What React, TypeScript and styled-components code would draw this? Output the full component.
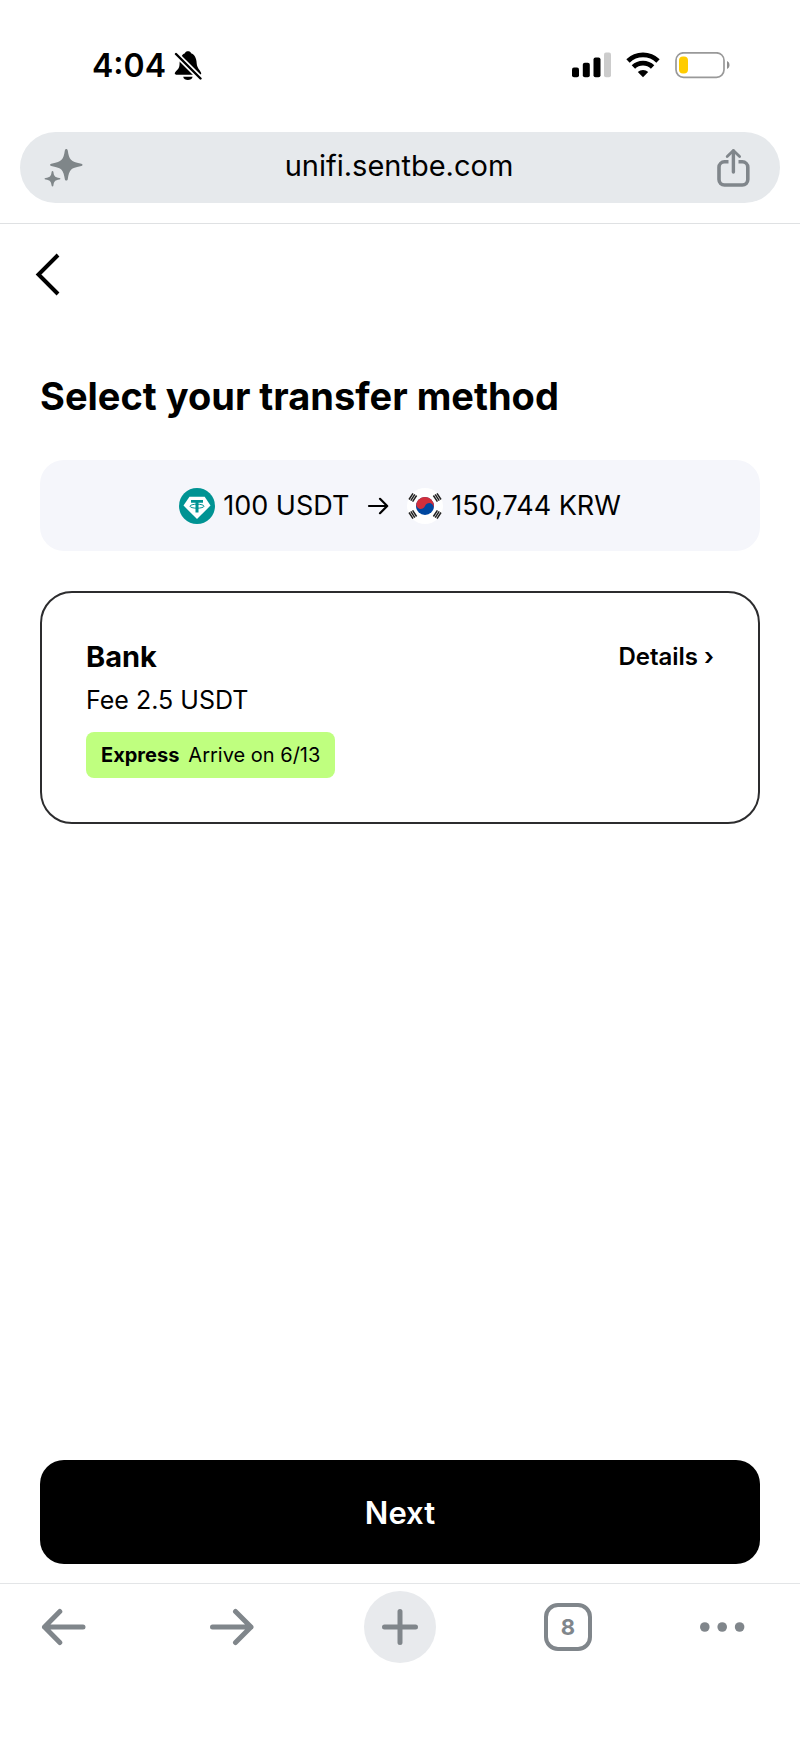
import React from "react";
import styled, {createGlobalStyle} from "styled-components";

const GlobalStyle = createGlobalStyle`
  * {
    box-sizing: border-box;
  }

  body {
    margin: 0;
    background: #fff;
    color: #000;
    font-family: Inter, "Liberation Sans", sans-serif;
  }

  button, input {
    font-family: inherit;
    color: inherit;
  }

  svg {
    display: block;
    flex: none;
  }
`;

const Page = styled.div`
  display: flex;
  flex-direction: column;
  min-height: 100vh;
`;

const StatusBar = styled.header`
  display: flex;
  align-items: center;
  justify-content: space-between;
  height: 132px;
  padding: 0 68px 0 92px;
`;

const StatusGroup = styled.div<{$gap: number}>`
  display: flex;
  align-items: center;
  gap: ${props => props.$gap}px;
`;

const Clock = styled.time`
  font-size: 32px;
  line-height: 40px;
  font-weight: 600;
`;

const BrowserBar = styled.div`
  padding: 0 20px 20px;
  border-bottom: 1px solid #dfe1e3;
`;

const AddressBar = styled.div`
  display: flex;
  align-items: center;
  height: 71px;
  padding: 0 26px 0 24px;
  border-radius: 36px;
  background: #e6e9ec;
`;

const AddressInput = styled.input`
  flex: 1;
  min-width: 0;
  padding: 0 0 4px;
  border: 0;
  outline: 0;
  background: transparent;
  font-size: 29px;
  line-height: 36px;
  text-align: center;
`;

const IconButton = styled.button`
  display: flex;
  align-items: center;
  justify-content: center;
  padding: 0;
  border: 0;
  background: transparent;
  color: #80868b;
  cursor: pointer;
`;

const BackButton = styled(IconButton)`
  align-self: flex-start;
  height: 100px;
  padding: 0 12px 0 32px;
  color: #000;
`;

const Content = styled.main`
  flex: 1;
  display: flex;
  flex-direction: column;
  padding: 48px 40px 19px;
`;

const Title = styled.h1`
  margin: 0 0 40px;
  font-size: 38px;
  line-height: 48px;
  font-weight: 700;
`;

const Summary = styled.div`
  display: flex;
  align-items: center;
  justify-content: center;
  gap: 16px;
  height: 91px;
  margin-bottom: 40px;
  border-radius: 24px;
  background: #f5f6fb;
`;

const Amount = styled.span`
  display: flex;
  align-items: center;
  gap: 8px;
  font-size: 27px;
  line-height: 36px;
`;

const MethodCard = styled.section`
  padding: 44px;
  border: 2px solid #2c2c2e;
  border-radius: 32px;
`;

const MethodHeader = styled.div`
  display: flex;
  align-items: center;
  justify-content: space-between;
`;

const MethodName = styled.h2`
  margin: 0;
  font-size: 29px;
  line-height: 40px;
  font-weight: 700;
`;

const DetailsLink = styled.a`
  display: flex;
  align-items: center;
  gap: 6px;
  color: inherit;
  font-size: 24px;
  line-height: 40px;
  font-weight: 600;
  text-decoration: none;
`;

const Fee = styled.p`
  margin: 3px 0 12px;
  font-size: 25px;
  line-height: 40px;
`;

const Badge = styled.p`
  display: inline-flex;
  gap: 9px;
  margin: 0;
  padding: 9px 15px;
  border-radius: 8px;
  background: #bfff7f;
  font-size: 20px;
  line-height: 28px;
  vertical-align: top;

  strong {
    font-weight: 700;
  }
`;

const NextButton = styled.button`
  height: 104px;
  margin-top: auto;
  border: 0;
  border-radius: 24px;
  background: #000;
  color: #fff;
  font-size: 31px;
  font-weight: 600;
  cursor: pointer;
`;

const Toolbar = styled.nav`
  display: flex;
  justify-content: space-between;
  height: 156px;
  padding: 7px 28px 0;
  border-top: 1px solid #e3e5e7;
`;

const ToolButton = styled(IconButton)<{$filled?: boolean; $start?: boolean}>`
  width: 72px;
  height: 72px;
  justify-content: ${props => props.$start ? "flex-start" : "center"};
  border-radius: 50%;
  background: ${props => props.$filled ? "#e8eaed" : "transparent"};
`;

const TabCount = styled.span`
  display: flex;
  align-items: center;
  justify-content: center;
  width: 48px;
  height: 48px;
  border: 4px solid #80868b;
  border-radius: 14px;
  font-size: 22px;
  font-weight: 700;
`;

const BellOffIcon = () => (
    <svg width="28" height="30" viewBox="0 0 28 30" aria-label="Silent mode">
        <path
            d="M.8 22.600c0-2.600 4.300-3.500 4.700-8.600C5.700 7 7.800 3.400 11 2.200c.5-2.600 5.500-2.600 6 0 3.500 1.200 5.500 4.800 5.700 10.300.2 5 4.500 7.500 4.500 10.100 0 .8-.5 1.200-1.200 1.200H2c-.8 0-1.200-.4-1.200-1.200z"
        />
        <path d="M9.200 25.700h9.400c-.6 4.300-8.800 4.300-9.400 0z"/>
        <path d="M0 1l28 28" stroke="#fff" strokeWidth="5.600"/>
        <path d="M2 3l24.500 24.500" stroke="#000" strokeWidth="2.400" strokeLinecap="round"/>
    </svg>
);

const SignalIcon = () => (
    <svg width="39" height="28" viewBox="0 0 39 28" aria-label="Signal">
        <rect x="0" y="15.500" width="7" height="9.800" rx="2"/>
        <rect x="10.800" y="10.800" width="7" height="14.500" rx="2"/>
        <rect x="21.500" y="5.500" width="7" height="19.800" rx="2"/>
        <rect x="32" y="0.500" width="7" height="24.800" rx="2" fill="#ccc"/>
    </svg>
);

const WifiIcon = () => (
    <svg width="34" height="28" viewBox="0 0 34 28" aria-label="Wi-Fi">
        <g fill="none" stroke="#000" strokeWidth="4.800">
            <path d="M2 9a21.500 21.500 0 0 1 30 0"/>
            <path d="M7.400 15a13.600 13.600 0 0 1 19.200 0"/>
        </g>
        <path d="M17 25.300l-5.200-5.200a7.600 7.600 0 0 1 10.400 0z"/>
    </svg>
);

const BatteryIcon = () => (
    <svg width="57" height="28" viewBox="0 0 57 28" aria-label="Battery low">
        <rect x="1" y="0.800" width="48" height="24.500" rx="7.500" fill="none" stroke="#999" strokeWidth="1.700"/>
        <rect x="4" y="4.500" width="9" height="17" rx="4" fill="#ffcc00"/>
        <path d="M52 9v8c3.300-1.200 3.300-6.800 0-8z" fill="#8e8e8e"/>
    </svg>
);

const SparkleIcon = () => (
    <svg width="40" height="40" viewBox="0 0 40 40" fill="#7f8689">
        <path d="M22.300 1c.8 0 1.300.5 1.500 1.700 1.300 9 3.200 11 12.500 12.700 3 .5 3 2.300 0 2.800-9.300 1.600-11.200 3.700-12.500 12.700-.3 2.200-2.700 2.200-3 0-1.300-9-3.200-11.100-12.500-12.700-3-.5-3-2.300 0-2.800 9.300-1.700 11.200-3.700 12.500-12.700.2-1.200.7-1.700 1.500-1.700z"/>
        <path d="M8.500 23c.5 0 .8.400.9 1 .6 4.300 1.500 5.200 6 6 1.400.3 1.400 1.300 0 1.600-4.500.8-5.400 1.700-6 6-.2 1.300-1.600 1.300-1.800 0-.6-4.300-1.500-5.200-6-6-1.400-.3-1.400-1.300 0-1.600 4.500-.8 5.400-1.700 6-6 .1-.6.400-1 .9-1z"/>
    </svg>
);

const ShareIcon = () => (
    <svg width="40" height="40" viewBox="0 0 40 40" fill="none" stroke="#80868b" strokeWidth="3.600" strokeLinecap="round" strokeLinejoin="round">
        <path d="M14.500 13.800h-4a5.500 5.500 0 0 0-5.500 5.500v12.200a5.500 5.500 0 0 0 5.500 5.500h17.800a5.500 5.500 0 0 0 5.500-5.500V19.300a5.500 5.500 0 0 0-5.500-5.500h-3.800" strokeLinecap="butt"/>
        <path d="M19.400 24V3" strokeWidth="3.400"/>
        <path d="M13.200 8.500l6.200-6 6.200 6" strokeWidth="2.800"/>
    </svg>
);

const TetherIcon = () => (
    <svg width="36" height="36" viewBox="0 0 36 36" aria-label="USDT">
        <circle cx="18" cy="18" r="18" fill="#009393"/>
        <path d="M10.500 8.800h15.200L31.500 17.600 18 31 4.500 17.600z" fill="#fff"/>
        <path d="M12 12h12v2.800h-4.500v9.700h-3v-9.700H12z" fill="#009393"/>
        <ellipse cx="18" cy="18.200" rx="7" ry="2" fill="none" stroke="#009393" strokeWidth="1"/>
    </svg>
);

const KoreaFlagIcon = () => (
    <svg width="36" height="36" viewBox="0 0 36 36" aria-label="KRW">
        <circle cx="18" cy="18" r="18" fill="#fff"/>
        <circle cx="18" cy="18" r="9" fill="#0047a0"/>
        <path d="M9 18a4.500 4.500 0 0 0 9 0 4.500 4.500 0 0 1 9 0A9 9 0 0 0 9 18z" fill="#d22f3c" transform="rotate(20 18 18)"/>
        <g stroke="#222" strokeWidth="1.500">
            <path d="M2 11.500l4-6.200M3.800 12.600l4-6.200M5.600 13.700l4-6.200"/>
            <path d="M34 11.500l-4-6.200M32.200 12.600l-4-6.200M30.400 13.700l-4-6.200"/>
            <path d="M2 24.500l4 6.200M3.800 23.400l4 6.200M5.600 22.300l4 6.200"/>
            <path d="M34 24.500l-4 6.200M32.200 23.400l-4 6.200M30.400 22.300l-4 6.200"/>
        </g>
    </svg>
);

const ConvertArrowIcon = () => (
    <svg width="26" height="20" viewBox="0 0 26 20" fill="none" stroke="#000" strokeWidth="2.200" strokeLinecap="round" strokeLinejoin="round">
        <path d="M4 10h18M15 2.800l7.200 7.200-7.200 7.200"/>
    </svg>
);

const ChevronIcon = () => (
    <svg width="28" height="44" viewBox="0 0 28 44" fill="none" stroke="#000" strokeWidth="4">
        <path d="M26 3L6.500 22.500 26 42"/>
    </svg>
);

const ArrowIcon = ({direction}: {direction: "left" | "right"}) => (
    <svg width="46" height="38" viewBox="0 0 46 38" fill="none" stroke="currentColor" strokeWidth="5" strokeLinecap="round" strokeLinejoin="round">
        <path d={direction === "left" ? "M42 19H3.500M18.800 3.500L3.500 19l15.300 15.500" : "M3.500 19H42M26.500 3.500L42 19 26.500 34.500"}/>
    </svg>
);

const PlusIcon = () => (
    <svg width="38" height="38" viewBox="0 0 38 38" stroke="currentColor" strokeWidth="5" strokeLinecap="round">
        <path d="M3.500 19h31M19 3.500v31"/>
    </svg>
);

const MoreIcon = () => (
    <svg width="46" height="12" viewBox="0 0 46 12" fill="currentColor">
        <circle cx="4.800" cy="6" r="4.800"/>
        <circle cx="22.200" cy="6" r="4.800"/>
        <circle cx="39.600" cy="6" r="4.800"/>
    </svg>
);

export default function App() {
    return (
        <Page>
            <GlobalStyle/>
            <StatusBar>
                <StatusGroup $gap={8}>
                    <Clock>4:04</Clock>
                    <BellOffIcon/>
                </StatusGroup>
                <StatusGroup $gap={15}>
                    <SignalIcon/>
                    <WifiIcon/>
                    <BatteryIcon/>
                </StatusGroup>
            </StatusBar>

            <BrowserBar>
                <AddressBar>
                    <IconButton aria-label="Assistant"><SparkleIcon/></IconButton>
                    <AddressInput type="text" aria-label="Address" defaultValue="unifi.sentbe.com"/>
                    <IconButton aria-label="Share"><ShareIcon/></IconButton>
                </AddressBar>
            </BrowserBar>

            <BackButton aria-label="Go back"><ChevronIcon/></BackButton>

            <Content>
                <Title>Select your transfer method</Title>
                <Summary>
                    <Amount><TetherIcon/>100 USDT</Amount>
                    <ConvertArrowIcon/>
                    <Amount><KoreaFlagIcon/>150,744 KRW</Amount>
                </Summary>
                <MethodCard>
                    <MethodHeader>
                        <MethodName>Bank</MethodName>
                        <DetailsLink href="#details">Details <span>›</span></DetailsLink>
                    </MethodHeader>
                    <Fee>Fee 2.5 USDT</Fee>
                    <Badge><strong>Express</strong><span>Arrive on 6/13</span></Badge>
                </MethodCard>
                <NextButton type="button">Next</NextButton>
            </Content>

            <Toolbar aria-label="Browser">
                <ToolButton aria-label="Back"><ArrowIcon direction="left"/></ToolButton>
                <ToolButton aria-label="Forward"><ArrowIcon direction="right"/></ToolButton>
                <ToolButton aria-label="New tab" $filled><PlusIcon/></ToolButton>
                <ToolButton aria-label="Tabs"><TabCount>8</TabCount></ToolButton>
                <ToolButton aria-label="More" $start><MoreIcon/></ToolButton>
            </Toolbar>
        </Page>
    );
}
